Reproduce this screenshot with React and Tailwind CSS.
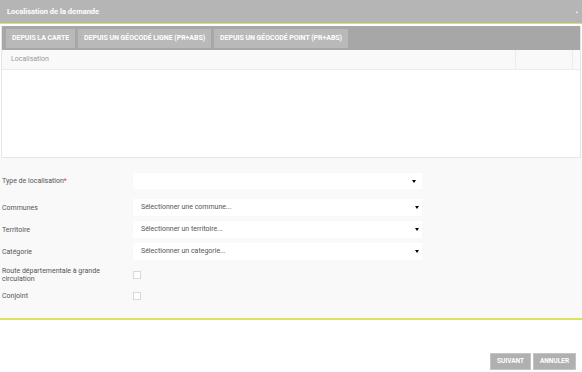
import React from 'react';

const Arrow = () => (
  <span className="inline-block w-0 h-0 border-l-[2.5px] border-r-[2.5px] border-t-[3.5px] border-l-transparent border-r-transparent border-t-black" />
);

const Select = ({ placeholder, arrowPad = 'pr-[3px]', h = 'h-[17px]' }) => (
  <div className={`w-[289px] ${h} bg-white flex items-center justify-between pl-[8px] ${arrowPad} text-[7px] text-[#555]`}>
    <span>{placeholder}</span>
    <Arrow />
  </div>
);

const Row = ({ label, required, children, className = '' }) => (
  <div className={`flex items-center ${className}`}>
    <div className="w-[133px] pl-[2px] text-[7px] text-[#555] leading-[8px]">
      {label}
      {required && <span className="text-[#e53935]">*</span>}
    </div>
    {children}
  </div>
);

const Checkbox = () => (
  <div className="w-[8px] h-[8px] bg-white border border-[#d8d8d8]" />
);

export default function App() {
  const tabs = ['DEPUIS LA CARTE', 'DEPUIS UN GÉOCODÉ LIGNE (PR+ABS)', 'DEPUIS UN GÉOCODÉ POINT (PR+ABS)'];

  return (
    <div className="w-[582px] h-[372px] bg-white flex flex-col overflow-hidden font-['Roboto',sans-serif]">
      {/* Header */}
      <div className="h-[24px] bg-[#b5b5b5] flex items-center justify-between pl-[7px] pr-[4px] border-b border-[#d7e36b]">
        <span className="text-white font-bold text-[7.5px]">Localisation de la demande</span>
        <span className="w-0 h-0 border-l-[1.5px] border-r-[1.5px] border-b-[2px] border-l-transparent border-r-transparent border-b-white" />
      </div>

      {/* Panel */}
      <div className="mt-[2px] mx-[1px] border-x border-b border-[#e6e6e6] flex flex-col">
        <div className="h-[24px] bg-[#a7a7a7] flex items-center gap-[3px] px-[4px]">
          {tabs.map((t) => (
            <div key={t} className="h-[19px] bg-[#b9b9b9] px-[6px] flex items-center text-white font-bold text-[7px] tracking-[-0.05px]">
              {t}
            </div>
          ))}
        </div>
        <div className="h-[20px] bg-[#f9f9f9] flex border-b border-[#ececec]">
          <div className="flex-1 pl-[9px] flex items-center text-[7px] text-[#999]">Localisation</div>
          <div className="w-[57px] border-l border-[#ececec]" />
          <div className="w-[8px] border-l border-[#ececec]" />
        </div>
        <div className="h-[87px] bg-white" />
      </div>

      {/* Form */}
      <div className="h-[162px] bg-[#f9f9f9] border-b-[2px] border-[#d9e65c] pt-[15px] flex flex-col">
        <Row label="Type de localisation" required>
          <Select placeholder="" arrowPad="pr-[6px]" h="h-[16px]" />
        </Row>
        <Row label="Communes" className="mt-[10px]">
          <Select placeholder="Sélectionner une commune..." />
        </Row>
        <Row label="Territoire" className="mt-[5px]">
          <Select placeholder="Sélectionner un territoire..." />
        </Row>
        <Row label="Catégorie" className="mt-[5px]">
          <Select placeholder="Sélectionner un categorie..." />
        </Row>
        <Row label={<>Route départementale à grande<br />circulation</>} className="mt-[6px] h-[17px]">
          <Checkbox />
        </Row>
        <Row label="Conjoint" className="mt-[7px] h-[12px]">
          <Checkbox />
        </Row>
      </div>

      {/* Footer */}
      <div className="flex-1 flex items-end justify-end gap-[2px] pr-[6px] pb-[2px]">
        <button className="h-[17px] w-[41px] bg-[#b0b0b0] border border-[#c4c4c4] text-white font-bold text-[6.5px]">SUIVANT</button>
        <button className="h-[17px] w-[43px] bg-[#b0b0b0] border border-[#c4c4c4] text-white font-bold text-[6.5px]">ANNULER</button>
      </div>
    </div>
  );
}
